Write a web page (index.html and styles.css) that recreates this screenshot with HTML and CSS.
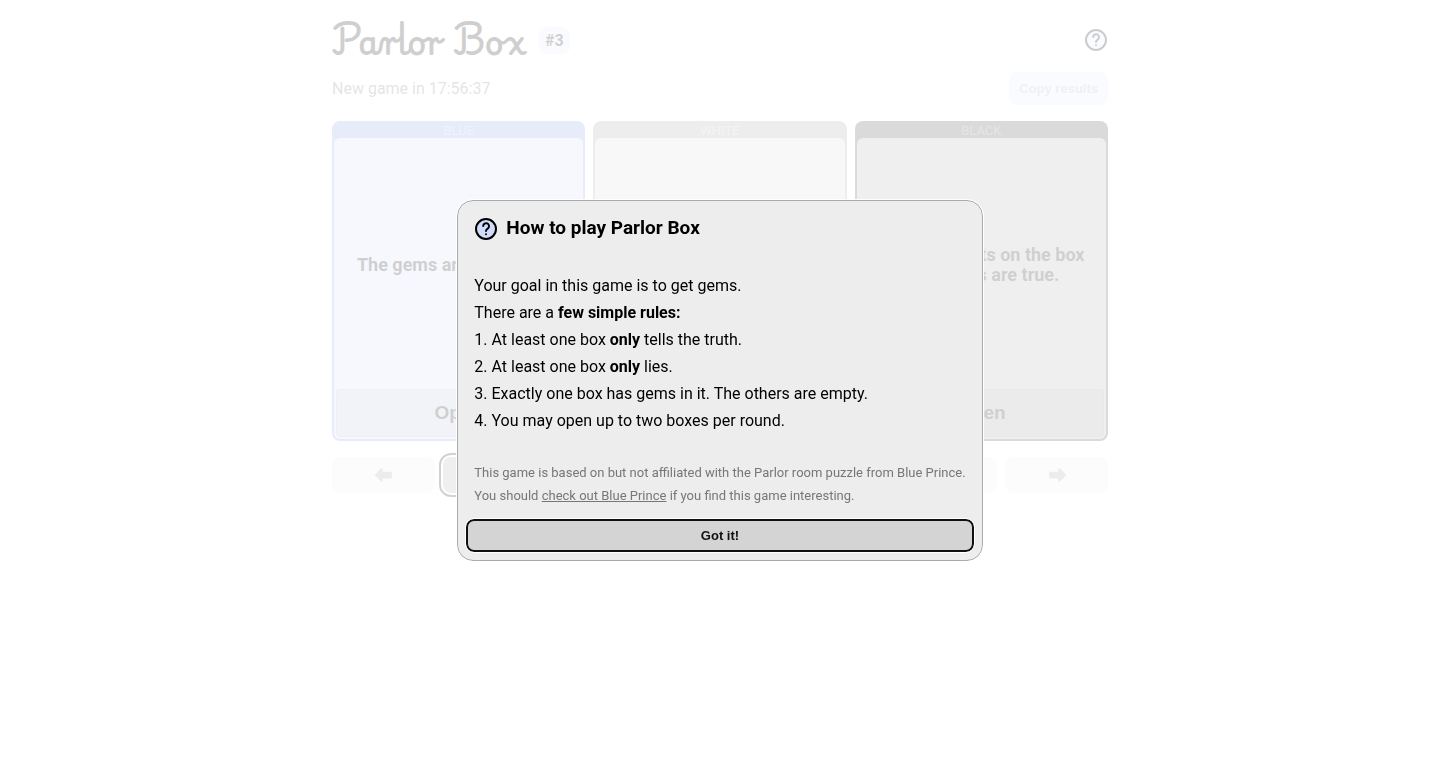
FILE: index.html
```html
<!DOCTYPE html>
<html lang="en">
<head>
    <meta charset="UTF-8">
    <meta name="viewport" content="width=device-width, initial-scale=1.0">
    <title>Parlor Box</title>
    <link rel="stylesheet" href="styles.css">
</head>
<body>
    <main class="game">
        <header class="header">
            <h1>Parlor Box</h1>
            <span class="round">#3</span>
            <button class="help" aria-label="How to play">
                <svg class="help-icon" viewBox="0 0 24 24">
                    <circle cx="12" cy="12" r="10"/>
                    <path d="M9.2 9a2.9 2.9 0 1 1 4.9 2.2c-1.1 1-2.1 1.5-2.1 2.9"/>
                    <path d="M12 17.2v.1"/>
                </svg>
            </button>
        </header>

        <div class="status">
            <span class="timer">New game in 17:56:37</span>
            <button class="copy">Copy results</button>
        </div>

        <div class="boxes">
            <section class="box blue">
                <h2>BLUE</h2>
                <div class="box-body">
                    <p>The gems are in this box.</p>
                    <button>Open</button>
                </div>
            </section>
            <section class="box white">
                <h2>WHITE</h2>
                <div class="box-body">
                    <p></p>
                    <button>Open</button>
                </div>
            </section>
            <section class="box black">
                <h2>BLACK</h2>
                <div class="box-body">
                    <p>All statements on the box with gems are true.</p>
                    <button>Open</button>
                </div>
            </section>
        </div>

        <nav class="rounds">
            <button aria-label="Previous round">
                <svg viewBox="0 0 16 16"><path d="M1 8l5-5v3h8v4H6v3z"/></svg>
            </button>
            <button class="current" aria-label="Round 1"></button>
            <button aria-label="Round 2"></button>
            <button aria-label="Round 3"></button>
            <button aria-label="Round 4"></button>
            <button aria-label="Round 5"></button>
            <button aria-label="Next round">
                <svg viewBox="0 0 16 16"><path d="M15 8l-5-5v3H2v4h8v3z"/></svg>
            </button>
        </nav>
    </main>

    <div class="backdrop">
        <dialog open class="rules" aria-labelledby="rules-title">
            <div class="rules-content">
                <div class="rules-header">
                    <svg class="help-icon" viewBox="0 0 24 24">
                        <circle cx="12" cy="12" r="10"/>
                        <path d="M9.2 9a2.9 2.9 0 1 1 4.9 2.2c-1.1 1-2.1 1.5-2.1 2.9"/>
                        <path d="M12 17.2v.1"/>
                    </svg>
                    <h3 id="rules-title">How to play Parlor Box</h3>
                </div>
                <div class="rules-text">
                    <p>Your goal in this game is to get gems.</p>
                    <p>There are a <b>few simple rules:</b></p>
                    <p>1. At least one box <b>only</b> tells the truth.</p>
                    <p>2. At least one box <b>only</b> lies.</p>
                    <p>3. Exactly one box has gems in it. The others are empty.</p>
                    <p>4. You may open up to two boxes per round.</p>
                </div>
                <div class="credits">
                    <p>This game is based on but not affiliated with the Parlor room puzzle from Blue Prince.</p>
                    <p>You should <a href="#">check out Blue Prince</a> if you find this game interesting.</p>
                </div>
            </div>
            <button class="got-it">Got it!</button>
        </dialog>
    </div>
</body>
</html>
```

FILE: styles.css
```css
* {
    box-sizing: border-box;
}
body {
    margin: 0;
    font-family: Roboto, sans-serif;
    font-size: 16px;
    color: #101010;
    background-color: #fff;
}
h1, h2, h3, p {
    margin: 0;
}
button {
    padding: 0;
    border: none;
    border-radius: 8px;
    font-family: "Liberation Sans", Arial, sans-serif;
    font-size: 13px;
    font-weight: bold;
    color: #101010;
    cursor: pointer;
}
.game {
    max-width: 792px;
    margin: 0 auto;
    padding: 16px 8px;
}
.header {
    display: flex;
    align-items: center;
    height: 48px;
    margin-bottom: 8px;
}
h1 {
    font-family: "Playwrite PL", Lato, cursive;
    font-size: 32px;
    line-height: 48px;
}
.round {
    margin-left: 14px;
    padding: 4px 6px;
    border-radius: 8px;
    line-height: 19px;
    font-weight: bold;
    background-color: #e6ebff;
}
.help {
    display: flex;
    margin-left: auto;
    background: none;
}
.help-icon {
    width: 24px;
    height: 24px;
    fill: none;
    stroke: #000;
    stroke-width: 2;
    stroke-linecap: round;
    stroke-linejoin: round;
}
.help-icon circle {
    fill: #d2dcfa;
}
.header .help-icon circle {
    fill: #e6ebff;
}
.status {
    display: flex;
    align-items: center;
    justify-content: space-between;
    margin-bottom: 16px;
}
.timer {
    color: #787878;
}
.copy {
    height: 33px;
    padding: 0 10px;
    color: #b4b4b4;
    background-color: #e6ebff;
}
.boxes {
    display: grid;
    grid-template-columns: repeat(3, 1fr);
    gap: 8px;
    margin-bottom: 16px;
}
.box {
    display: flex;
    flex-direction: column;
    height: 320px;
    padding: 0 2px 2px;
    border-radius: 8px;
    text-align: center;
}
.box h2 {
    padding-top: 2px;
    font-size: 13px;
    font-weight: normal;
    line-height: 15px;
}
.box-body {
    display: flex;
    flex: 1;
    flex-direction: column;
    padding: 2px;
    border-radius: 6px;
}
.box p {
    display: flex;
    flex: 1;
    align-items: center;
    justify-content: center;
    padding: 0 16px;
    font-size: 18px;
    font-weight: bold;
    line-height: 20px;
}
.box button {
    height: 48px;
    border: 1px solid rgba(0, 0, 0, 0.06);
    border-radius: 4px;
    font-size: 19px;
    background-color: rgba(0, 0, 0, 0.12);
}
.blue {
    background-color: #82a0e6;
}
.blue h2 {
    color: #b4c3f0;
}
.blue .box-body {
    background-color: #d2dcfa;
}
.white {
    background-color: #a5a5a5;
}
.white h2 {
    color: #c8c8c8;
}
.white .box-body {
    background-color: #dcdcdc;
}
.black {
    background-color: #464646;
}
.black h2 {
    color: #828282;
}
.black .box-body {
    background-color: #afafaf;
}
.rounds {
    display: grid;
    grid-template-columns: 103px repeat(5, 1fr) 103px;
    gap: 8px;
}
.rounds button {
    display: flex;
    align-items: center;
    justify-content: center;
    height: 36px;
    background-color: #f0f0f0;
}
.rounds .current {
    background-color: #afafaf;
    outline: 2px solid #1e1e1e;
    outline-offset: 2px;
}
.rounds svg {
    width: 18px;
    height: 18px;
    fill: #a0a0a0;
    stroke: #a0a0a0;
    stroke-width: 2;
    stroke-linejoin: round;
}
.backdrop {
    position: fixed;
    inset: 0;
    display: flex;
    align-items: center;
    justify-content: center;
    background-color: rgba(255, 255, 255, 0.8);
}
.rules {
    position: static;
    margin: 0;
    padding: 8px;
    border: 1px solid #aaa;
    border-radius: 16px;
    outline: 1px solid #fff;
    color: #000;
    background-color: #ededed;
}
.rules-content {
    padding: 8px 8px 12px;
}
.rules-header {
    display: flex;
    gap: 8px;
    margin-bottom: 31px;
}
.rules-header h3 {
    font-size: 19px;
    line-height: 22px;
}
.rules-text {
    margin-bottom: 27px;
    line-height: 27px;
}
.credits {
    font-size: 13px;
    line-height: 23px;
    color: #777;
}
.credits a {
    color: inherit;
}
.got-it {
    display: block;
    width: 100%;
    height: 33px;
    border: 2px solid #101010;
    outline: 1px solid #fff;
    background-color: #d4d4d4;
}
```
